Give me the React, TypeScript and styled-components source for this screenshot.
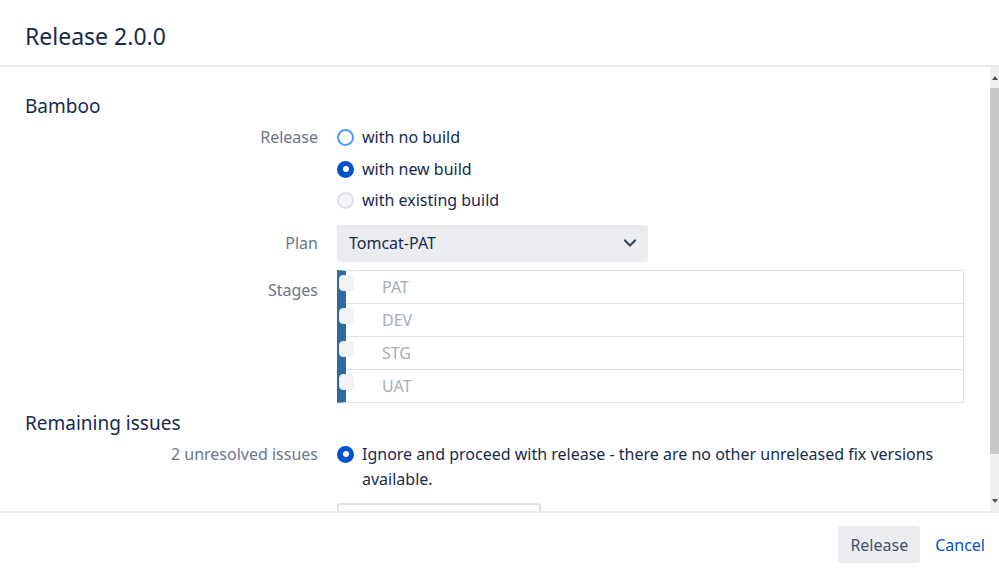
import React from "react";
import styled, { createGlobalStyle } from "styled-components";
import { ChevronDown } from "lucide-react";

const GlobalStyle = createGlobalStyle`
  html, body {
    margin: 0;
    padding: 0;
    background: #fff;
  }
  body {
    font-family: "Noto Sans", "Open Sans", sans-serif;
    color: #172b4d;
  }
`;

const Dialog = styled.div`
  width: 999px;
  height: 570px;
  display: flex;
  flex-direction: column;
  background: #fff;
`;

const Header = styled.header`
  flex: none;
  height: 67px;
  box-sizing: border-box;
  display: flex;
  align-items: center;
  padding: 0 25px;
  border-bottom: 2px solid #ebecf0;
`;

const Title = styled.h1`
  margin: 6px 0 0;
  font-size: 23px;
  font-weight: 400;
  color: #172b4d;
`;

const Body = styled.div`
  flex: 1;
  min-height: 0;
  display: flex;
`;

const Content = styled.div`
  flex: 1;
  overflow: hidden;
  padding: 26px 26px 0 25px;
`;

/* scrollbar column on the right of the dialog body */
const Track = styled.div`
  flex: none;
  width: 9px;
  background: #f0f0f0;
  display: flex;
  flex-direction: column;
  align-items: center;
`;

const Arrow = styled.span<{ $down?: boolean }>`
  flex: none;
  height: 21px;
  display: flex;
  align-items: center;
  justify-content: center;
  margin-top: ${(p) => (p.$down ? "auto" : "0")};

  &::before {
    content: "";
    width: 0;
    height: 0;
    border-left: 3px solid transparent;
    border-right: 3px solid transparent;
    ${(p) =>
      p.$down ? "border-top: 4px solid #505050;" : "border-bottom: 4px solid #505050;"}
  }
`;

const Thumb = styled.div`
  flex: none;
  width: 100%;
  height: 366px;
  background: #c8c8c8;
`;

const Section = styled.h2`
  margin: 0;
  font-size: 19px;
  line-height: 26px;
  font-weight: 400;
  color: #172b4d;
`;

const Form = styled.div`
  display: grid;
  grid-template-columns: 293px 1fr;
  column-gap: 19px;
  row-gap: 8px;
  margin: 3px 0 7px;
`;

const Label = styled.div<{ $h?: number }>`
  text-align: right;
  font-size: 16px;
  color: #6b778c;
  line-height: ${(p) => p.$h ?? 31.5}px;
`;

const Options = styled.div`
  display: flex;
  flex-direction: column;
`;

const Option = styled.label`
  display: flex;
  align-items: flex-start;
  gap: 8px;
  font-size: 16px;
  line-height: 25px;
  padding: 3.25px 0;
  color: #172b4d;
`;

const Radio = styled.span<{ $state: "focus" | "checked" | "disabled" }>`
  flex: none;
  width: 17px;
  height: 17px;
  margin-top: 4px;
  border-radius: 50%;
  box-sizing: border-box;
  border: 2px solid
    ${(p) =>
      p.$state === "focus" ? "#4c9aff" : p.$state === "checked" ? "#0052cc" : "#dfe1e6"};
  background: ${(p) =>
    p.$state === "checked" ? "#0052cc" : p.$state === "disabled" ? "#f4f5f7" : "#fff"};
  display: flex;
  align-items: center;
  justify-content: center;

  &::after {
    content: "";
    display: ${(p) => (p.$state === "checked" ? "block" : "none")};
    width: 6px;
    height: 6px;
    border-radius: 50%;
    background: #fff;
  }
`;

const Select = styled.div`
  width: 311px;
  height: 37px;
  box-sizing: border-box;
  border-radius: 3px;
  background: #ebecf0;
  display: flex;
  align-items: center;
  justify-content: space-between;
  padding: 0 8px 0 12px;
  font-size: 16px;
  color: #172b4d;
`;

const StageTable = styled.div`
  border: 1px solid #e4e4e4;
  border-left: 9px solid #2d6aa6;
  display: flex;
  flex-direction: column;
`;

const StageRow = styled.div`
  position: relative;
  height: 32px;
  display: flex;
  align-items: center;
  padding-left: 36px;
  font-size: 16px;
  color: #a5adba;
  & + & {
    border-top: 1px solid #e4e4e4;
  }
`;

// faint checkbox tucked under the colour bar
const StageCheck = styled.span`
  position: absolute;
  left: -7px;
  top: 4px;
  width: 13px;
  height: 14px;
  border-radius: 4px;
  background: #f3f4f6;
  border: 1px solid #ecedf0;
`;

const FieldBox = styled.div`
  width: 204px;
  height: 36px;
  margin-top: 8px;
  border: 2px solid #dfe1e6;
  border-radius: 3px;
  box-sizing: border-box;
`;

const Footer = styled.footer`
  flex: none;
  height: 59px;
  border-top: 2px solid #ebecf0;
  box-sizing: border-box;
  display: flex;
  align-items: center;
  justify-content: flex-end;
  gap: 10px;
  padding: 6px 9px 0 0;
`;

const Button = styled.button<{ $link?: boolean }>`
  font-family: inherit;
  font-size: 16px;
  height: 37px;
  border: none;
  border-radius: 3px;
  padding: ${(p) => (p.$link ? "0 5px" : "0 12px")};
  cursor: pointer;
  background: ${(p) => (p.$link ? "transparent" : "#ebecf0")};
  color: ${(p) => (p.$link ? "#0052cc" : "#42526e")};
`;

const stages = ["PAT", "DEV", "STG", "UAT"];

export default function App() {
  return (
    <Dialog>
      <GlobalStyle />
      <Header>
        <Title>Release 2.0.0</Title>
      </Header>
      <Body>
        <Content>
          <Section>Bamboo</Section>
          <Form>
            <Label>Release</Label>
            <Options>
              <Option>
                <Radio $state="focus" />
                with no build
              </Option>
              <Option>
                <Radio $state="checked" />
                with new build
              </Option>
              <Option>
                <Radio $state="disabled" />
                with existing build
              </Option>
            </Options>

            <Label $h={37}>Plan</Label>
            <Select>
              Tomcat-PAT
              <ChevronDown size={20} strokeWidth={2.6} color="#344563" />
            </Select>

            <Label $h={41}>Stages</Label>
            <StageTable>
              {stages.map((s) => (
                <StageRow key={s}>
                  <StageCheck />
                  {s}
                </StageRow>
              ))}
            </StageTable>
          </Form>

          <Section>Remaining issues</Section>
          <Form>
            <Label>2 unresolved issues</Label>
            <Options>
              <Option>
                <Radio $state="checked" />
                Ignore and proceed with release - there are no other unreleased fix
                versions available.
              </Option>
              <FieldBox />
            </Options>
          </Form>
        </Content>
        <Track>
          <Arrow />
          <Thumb />
          <Arrow $down />
        </Track>
      </Body>
      <Footer>
        <Button>Release</Button>
        <Button $link>Cancel</Button>
      </Footer>
    </Dialog>
  );
}
